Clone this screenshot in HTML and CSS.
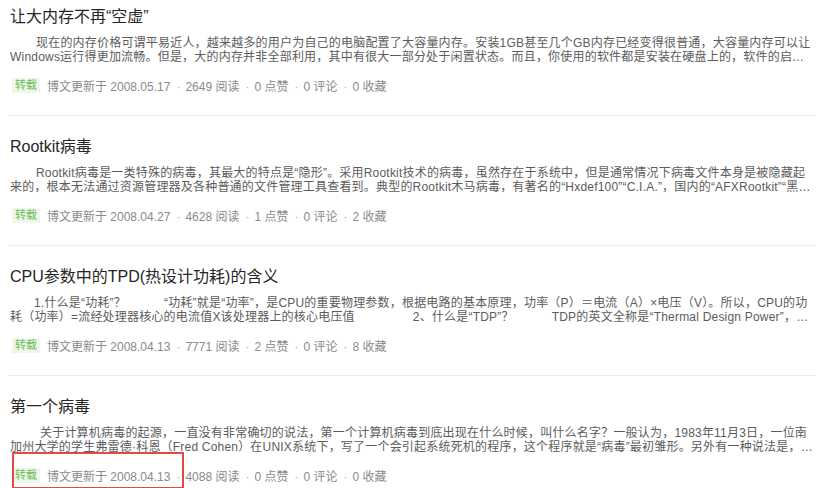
FILE: index.html
```html
<!DOCTYPE html>
<html lang="zh-CN">

<head>
    <meta charset="UTF-8">
    <meta name="viewport" content="width=device-width, initial-scale=1.0">
    <title>博文列表</title>
    <link rel="stylesheet" href="styles.css">
</head>

<body>
    <section class="liste">
        <article class="post">
            <h2>让大内存不再“空虚”</h2>
            <p class="resume">
                <span class="linje foerste">现在的内存价格可谓平易近人，越来越多的用户为自己的电脑配置了大容量内存。安装1GB甚至几个GB内存已经变得很普通，大容量内存可以让</span>
                <span class="linje">Windows运行得更加流畅。但是，大的内存并非全部利用，其中有很大一部分处于闲置状态。而且，你使用的软件都是安装在硬盘上的，软件的启…</span>
            </p>
            <div class="meta">
                <span class="tag">转载</span>
                <span class="info">博文更新于 2008.05.17</span>
                <span class="info">2649 阅读</span>
                <span class="info">0 点赞</span>
                <span class="info">0 评论</span>
                <span class="info">0 收藏</span>
            </div>
        </article>

        <article class="post">
            <h2>Rootkit病毒</h2>
            <p class="resume">
                <span class="linje foerste">Rootkit病毒是一类特殊的病毒，其最大的特点是“隐形”。采用Rootkit技术的病毒，虽然存在于系统中，但是通常情况下病毒文件本身是被隐藏起</span>
                <span class="linje">来的，根本无法通过资源管理器及各种普通的文件管理工具查看到。典型的Rootkit木马病毒，有著名的“Hxdef100”“C.I.A.”，国内的“AFXRootkit”“黑…</span>
            </p>
            <div class="meta">
                <span class="tag">转载</span>
                <span class="info">博文更新于 2008.04.27</span>
                <span class="info">4628 阅读</span>
                <span class="info">1 点赞</span>
                <span class="info">0 评论</span>
                <span class="info">2 收藏</span>
            </div>
        </article>

        <article class="post">
            <h2>CPU参数中的TPD(热设计功耗)的含义</h2>
            <p class="resume">
                <span class="linje foerste kort">1.什么是“功耗”？<span class="luft"></span>“功耗”就是“功率”，是CPU的重要物理参数，根据电路的基本原理，功率（P）＝电流（A）×电压（V）。所以，CPU的功</span>
                <span class="linje">耗（功率）=流经处理器核心的电流值X该处理器上的核心电压值<span class="luft lang"></span>2、什么是“TDP”？<span class="luft"></span>TDP的英文全称是“Thermal Design Power”，…</span>
            </p>
            <div class="meta">
                <span class="tag">转载</span>
                <span class="info">博文更新于 2008.04.13</span>
                <span class="info">7771 阅读</span>
                <span class="info">2 点赞</span>
                <span class="info">0 评论</span>
                <span class="info">8 收藏</span>
            </div>
        </article>

        <article class="post">
            <h2>第一个病毒</h2>
            <p class="resume">
                <span class="linje foerste lang">关于计算机病毒的起源，一直没有非常确切的说法，第一个计算机病毒到底出现在什么时候，叫什么名字？一般认为，1983年11月3日，一位南</span>
                <span class="linje">加州大学的学生弗雷德·科恩（Fred Cohen）在UNIX系统下，写了一个会引起系统死机的程序，这个程序就是“病毒”最初雏形。另外有一种说法是，…</span>
            </p>
            <div class="meta">
                <span class="tag">转载</span>
                <span class="info">博文更新于 2008.04.13</span>
                <span class="info">4088 阅读</span>
                <span class="info">0 点赞</span>
                <span class="info">0 评论</span>
                <span class="info">0 收藏</span>
                <span class="markering"></span>
            </div>
        </article>
    </section>
</body>

</html>
```

FILE: styles.css
```css
* {
    box-sizing: border-box;
}

body {
    margin: 0;
    background-color: white;
    font-family: "Liberation Sans", "Noto Sans CJK SC", sans-serif;
    overflow: hidden;
}

.liste {
    margin: 0 14px 0 8px;
}

.post {
    padding: 21px 0 21px 2px;
    border-bottom: 1px solid #ededed;
}

.post:first-child {
    padding-top: 7px;
}

h2 {
    margin: 0;
    font-size: 16px;
    line-height: 20px;
    font-weight: normal;
    color: #262626;
}

.resume {
    margin: 9px 0 0;
    font-size: 12px;
    line-height: 14px;
    color: #5c5c5c;
    letter-spacing: 0.2px;
}

.linje {
    display: block;
    white-space: nowrap;
    overflow: hidden;
}

.foerste {
    text-indent: 26px;
}

.foerste.kort {
    text-indent: 24px;
}

.foerste.lang {
    text-indent: 30px;
}

.luft {
    display: inline-block;
    width: 38px;
}

.luft.lang {
    width: 58px;
}

.meta {
    position: relative;
    display: flex;
    align-items: center;
    margin-top: 12px;
    height: 18px;
    font-size: 12px;
    color: #8a8a8a;
}

.tag {
    margin: 0 7px 0 2px;
    padding: 0 3px;
    height: 15px;
    line-height: 15px;
    font-size: 11px;
    color: #6cbd55;
    background-color: #eef7ea;
}

.info + .info::before {
    content: "·";
    margin: 0 5px 0 6px;
    color: #b0b0b0;
}

.markering {
    position: absolute;
    left: 2px;
    top: -14px;
    width: 172px;
    height: 37px;
    border: 2px solid #e34848;
}
```
